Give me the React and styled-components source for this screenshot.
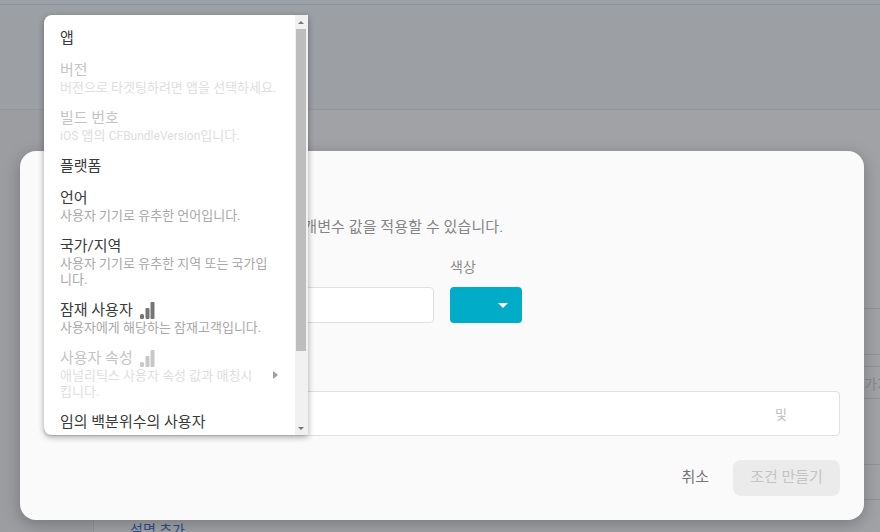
import React from 'react';
import styled, { createGlobalStyle } from 'styled-components';

const GlobalStyle = createGlobalStyle`
  html, body {
    margin: 0;
    height: 100%;
    overflow: hidden;
    background: #f5f9fd;
    font-family: Roboto, "Noto Sans CJK KR", sans-serif;
  }
  * { box-sizing: border-box; }
`;

const Page = styled.div`
  position: relative;
  width: 880px;
  height: 532px;
  overflow: hidden;
  display: flex;
  flex-direction: column;
`;

const TopStrip = styled.div`
  height: 5px;
  flex: none;
  background: #eff3f8;
  border-bottom: 1px solid #d0dff8;
`;

const Header = styled.div`
  height: 105px;
  flex: none;
  background: #eff3f8;
  border-bottom: 1px solid #e1e4e8;
`;

const Body = styled.div`
  flex: 1;
  display: flex;
`;

const Sidebar = styled.div`
  width: 94px;
  flex: none;
  background: #eef1f5;
  border-right: 1px solid #e0e3e8;
`;

const Main = styled.div`
  flex: 1;
  display: flex;
  flex-direction: column;
`;

const Row = styled.div`
  flex: none;
  height: ${p => p.$h}px;
  border-bottom: 1px solid #dde0e4;
  padding-left: 770px;
  display: flex;
  align-items: center;
  color: #c9ccd1;
  font-size: 14px;
  white-space: nowrap;
`;

const LinkRow = styled.div`
  padding: 20px 0 0 36px;
  color: #2f6fd0;
  font-size: 14px;
  line-height: 20px;
`;

const Backdrop = styled.div`
  position: absolute;
  inset: 0;
  background: rgba(32, 33, 36, 0.4);
`;

const Dialog = styled.div`
  position: absolute;
  left: 20px;
  top: 151px;
  width: 844px;
  height: 369px;
  padding: 12px 24px 24px;
  background: #fafafa;
  border-radius: 16px;
  box-shadow: 0 4px 16px rgba(0, 0, 0, 0.25);
  display: flex;
  flex-direction: column;
`;

const Title = styled.h2`
  margin: 0;
  height: 54px;
  font-size: 20px;
  line-height: 28px;
  font-weight: 500;
  color: #212121;
`;

const Description = styled.p`
  margin: 0 0 20px;
  font-size: 15px;
  line-height: 20px;
  letter-spacing: 0.1px;
  color: #858585;
  white-space: nowrap;
`;

const FieldRow = styled.div`
  display: flex;
  gap: 16px;
`;

const Field = styled.div`
  display: flex;
  flex-direction: column;
  gap: 10px;
  width: ${p => p.$w}px;
`;

const Label = styled.label`
  font-size: 14px;
  line-height: 20px;
  color: #8a8a8a;
`;

const TextInput = styled.div`
  height: 36px;
  background: #fff;
  border: 1px solid #e0e0e0;
  border-radius: 4px;
`;

const ColorButton = styled.div`
  height: 36px;
  padding-right: 14px;
  background: #00acc7;
  border-radius: 4px;
  display: flex;
  align-items: center;
  justify-content: flex-end;
`;

const Caret = styled.span`
  width: 0;
  height: 0;
  border-left: 5px solid transparent;
  border-right: 5px solid transparent;
  border-top: 5px solid #fff;
`;

const SectionLabel = styled.div`
  margin-top: 16px;
  height: 52px;
  font-size: 14px;
  line-height: 20px;
  color: #757575;
`;

const ConditionBox = styled.div`
  height: 45px;
  background: #fff;
  border: 1px solid #e0e0e0;
  border-radius: 4px;
  padding-right: 52px;
  display: flex;
  align-items: center;
  justify-content: flex-end;
  font-size: 13px;
  color: #bdbdbd;
`;

const Footer = styled.div`
  margin-top: auto;
  display: flex;
  justify-content: flex-end;
  align-items: center;
  gap: 24px;
`;

const CancelButton = styled.span`
  padding-bottom: 5px;
  font-size: 15px;
  color: #757575;
`;

const CreateButton = styled.div`
  width: 107px;
  height: 36px;
  padding-bottom: 5px;
  background: #ebebeb;
  border-radius: 8px;
  font-size: 15px;
  color: #c4c4c4;
  display: flex;
  align-items: center;
  justify-content: center;
`;

const Menu = styled.div`
  position: absolute;
  left: 44px;
  top: 15px;
  width: 264px;
  height: 420px;
  display: flex;
  background: #fff;
  border-radius: 8px 0 0 8px;
  box-shadow: 0 2px 6px rgba(0, 0, 0, 0.35);
`;

const MenuList = styled.div`
  flex: 1;
  min-width: 0;
  padding-top: 6px;
  overflow: hidden;
  border-radius: 8px 0 0 8px;
`;

const MenuItem = styled.div`
  position: relative;
  padding: 7px ${p => (p.$sub ? 37 : 17)}px 5px 16px;
`;

const ItemTitle = styled.div`
  display: flex;
  align-items: center;
  gap: 6px;
  font-size: 15px;
  line-height: 20px;
  white-space: nowrap;
  color: ${p => (p.$off ? '#c4c4c4' : '#3a3a3a')};
`;

const BarsIcon = styled.svg`
  margin-top: 1px;
`;

const ItemHint = styled.div`
  font-size: 13px;
  line-height: 16px;
  word-break: break-all;
  color: ${p => (p.$off ? '#dedede' : '#a8a8a8')};
`;

const LatinHint = styled.span`
  font-size: 12px;
`;

const SubArrow = styled.span`
  position: absolute;
  right: 17px;
  top: 30px;
  width: 0;
  height: 0;
  border-top: 4px solid transparent;
  border-bottom: 4px solid transparent;
  border-left: 5px solid #9e9e9e;
`;

const ScrollBar = styled.div`
  flex: none;
  width: 13px;
  padding: 0 2px 0 1px;
  background: #f1f1f1;
  display: flex;
  flex-direction: column;
  align-items: center;
`;

const ScrollStep = styled.div`
  flex: none;
  height: 14px;
  display: flex;
  align-items: center;
  justify-content: center;
`;

const ScrollArrow = styled.span`
  width: 0;
  height: 0;
  border-left: 3px solid transparent;
  border-right: 3px solid transparent;
  ${p => (p.$down ? 'border-top' : 'border-bottom')}: 3px solid #777;
`;

const ScrollThumb = styled.div`
  flex: none;
  width: 10px;
  height: 322px;
  background: #bdbdbd;
`;

const ScrollRest = styled.div`
  flex: 1;
`;

const Bars = ({ off }) => (
  <BarsIcon width="16" height="17" viewBox="0 0 16 17" fill={off ? '#c8c8c8' : '#757575'}>
    <rect x="1" y="12" width="4" height="5" rx="1.5" />
    <rect x="6.5" y="6" width="4" height="11" rx="1" />
    <rect x="11.5" y="0" width="4" height="17" rx="1" />
  </BarsIcon>
);

const items = [
  { title: '앱' },
  { title: '버전', hint: '버전으로 타겟팅하려면 앱을 선택하세요.', off: true },
  {
    title: '빌드 번호',
    hint: <><LatinHint>iOS</LatinHint> 앱의 <LatinHint>CFBundleVersion</LatinHint>입니다.</>,
    off: true,
  },
  { title: '플랫폼' },
  { title: '언어', hint: '사용자 기기로 유추한 언어입니다.' },
  { title: '국가/지역', hint: '사용자 기기로 유추한 지역 또는 국가입니다.' },
  { title: '잠재 사용자', hint: '사용자에게 해당하는 잠재고객입니다.', bars: true },
  { title: '사용자 속성', hint: '애널리틱스 사용자 속성 값과 매칭시킵니다.', bars: true, off: true, sub: true },
  { title: '임의 백분위수의 사용자' },
];

const rows = [199, 46, 12, 32, 66, 35];

const App = () => {
  return (
    <Page>
      <GlobalStyle />
      <TopStrip />
      <Header />
      <Body>
        <Sidebar />
        <Main>
          {rows.map((h, i) => (
            <Row key={i} $h={h}>{i === 3 ? '가기' : null}</Row>
          ))}
          <LinkRow>설명 추가</LinkRow>
        </Main>
      </Body>
      <Backdrop />
      <Dialog>
        <Title>새 조건 정의</Title>
        <Description>이 조건과 일치하는 앱 인스턴스에 다른 매개변수 값을 적용할 수 있습니다.</Description>
        <FieldRow>
          <Field $w={390}>
            <Label>이름</Label>
            <TextInput />
          </Field>
          <Field $w={72}>
            <Label>색상</Label>
            <ColorButton><Caret /></ColorButton>
          </Field>
        </FieldRow>
        <SectionLabel>다음에 해당하는 경우 적용</SectionLabel>
        <ConditionBox>및</ConditionBox>
        <Footer>
          <CancelButton>취소</CancelButton>
          <CreateButton>조건 만들기</CreateButton>
        </Footer>
      </Dialog>
      <Menu>
        <MenuList>
          {items.map(item => (
            <MenuItem key={item.title} $sub={item.sub}>
              <ItemTitle $off={item.off}>
                {item.title}
                {item.bars && <Bars off={item.off} />}
              </ItemTitle>
              {item.hint && <ItemHint $off={item.off}>{item.hint}</ItemHint>}
              {item.sub && <SubArrow />}
            </MenuItem>
          ))}
        </MenuList>
        <ScrollBar>
          <ScrollStep><ScrollArrow /></ScrollStep>
          <ScrollThumb />
          <ScrollRest />
          <ScrollStep><ScrollArrow $down /></ScrollStep>
        </ScrollBar>
      </Menu>
    </Page>
  );
};

export default App;
